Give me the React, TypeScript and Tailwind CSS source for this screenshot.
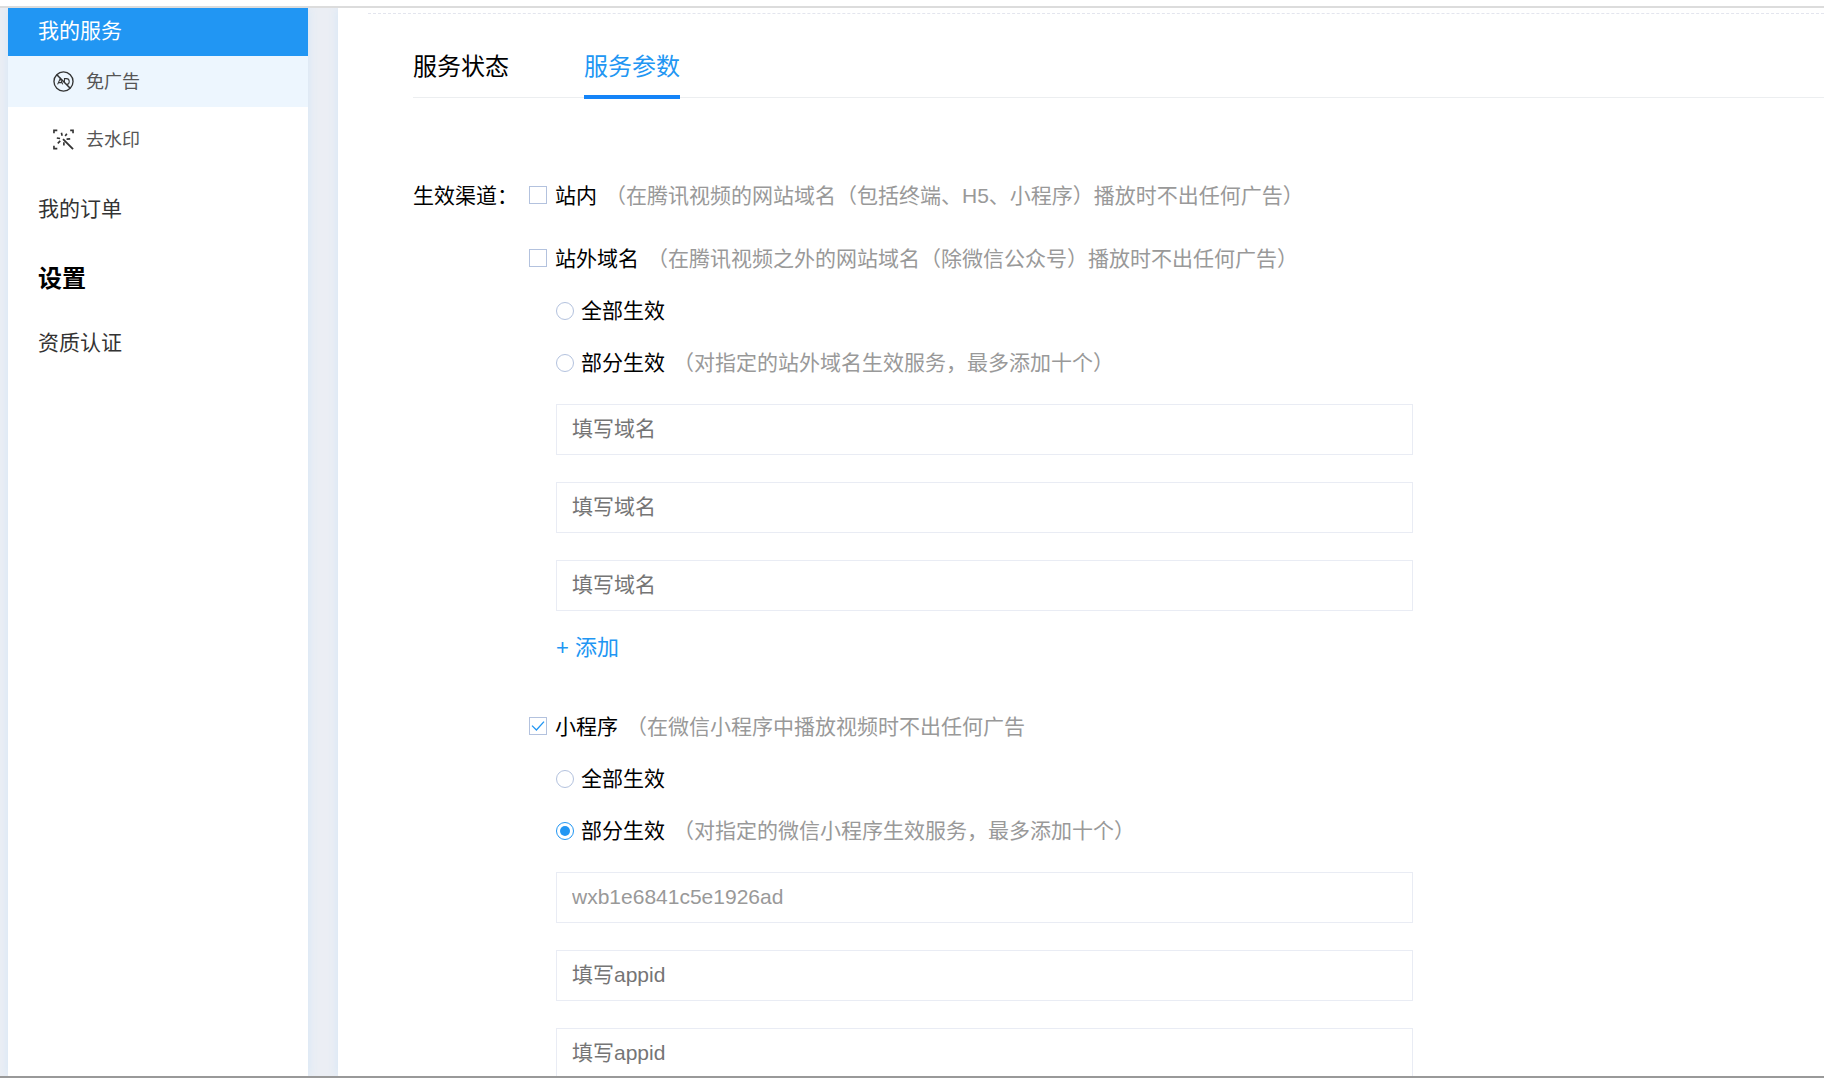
import { useState } from "react";

interface ChannelRowProps {
  label: string;
  hint?: string;
  checked: boolean;
  onChange: () => void;
}

function CheckRow({ label, hint, checked, onChange }: ChannelRowProps) {
  return (
    <label className="flex h-8 items-center">
      <span className="relative mr-2 flex size-[18px]">
        <input
          type="checkbox"
          checked={checked}
          onChange={onChange}
          className="size-[18px] appearance-none border border-[#b3c2de] bg-white"
        />
        {checked && (
          <svg viewBox="0 0 18 18" className="pointer-events-none absolute inset-0" fill="none">
            <path d="M3 8.6 7.4 13 15 4.6" stroke="#2196f3" strokeWidth="1.3" />
          </svg>
        )}
      </span>
      <span className="pt-0.5">{label}</span>
      {hint && <span className="ml-2 pt-0.5 text-[#999]">{hint}</span>}
    </label>
  );
}

function RadioRow({ label, hint, checked, onChange, name }: ChannelRowProps & { name: string }) {
  return (
    <label className="flex h-8 items-center">
      <span className="relative mr-[7px] flex size-[18px]">
        <input
          type="radio"
          name={name}
          checked={checked}
          onChange={onChange}
          className="size-[18px] appearance-none rounded-full border border-[#b3c2de] bg-white checked:border-[#2196f3]"
        />
        {checked && (
          <span className="pointer-events-none absolute inset-1 rounded-full bg-[#2196f3]" />
        )}
      </span>
      <span>{label}</span>
      {hint && <span className="ml-2 text-[#999]">{hint}</span>}
    </label>
  );
}

interface FieldListProps {
  values: string[];
  placeholder: string;
  onChange: (values: string[]) => void;
}

function FieldList({ values, placeholder, onChange }: FieldListProps) {
  return (
    <div className="mt-[25px] flex flex-col gap-[27px]">
      {values.map((value, index) => (
        <input
          key={index}
          type="text"
          aria-label={`${placeholder} ${index + 1}`}
          value={value}
          placeholder={placeholder}
          onChange={(e) => onChange(values.map((v, i) => (i === index ? e.target.value : v)))}
          className="h-[51px] w-full border border-[#e9ecf4] bg-white px-[15px] pb-0.5 text-[#999] outline-none placeholder:text-[#757575]"
        />
      ))}
    </div>
  );
}

function NoAdIcon() {
  return (
    <svg viewBox="0 0 22 22" className="size-[21px]" fill="none" stroke="#333" strokeWidth="1.4">
      <circle cx="11" cy="11" r="10" />
      <path d="M4 4 18 18" strokeWidth="1.6" />
      <path d="M4.8 14 7.6 8 10.2 14M6 12.2H9.2" strokeWidth="1.1" />
      <path d="M12 11.6V8H14C16 8 17 9.3 17 11S16 14 14.6 14" strokeWidth="1.1" />
    </svg>
  );
}

function WatermarkIcon() {
  return (
    <svg viewBox="0 0 22 22" className="size-[21px]" fill="none" stroke="#333" strokeWidth="1.7">
      <path d="M1 4.5V1.5H4.5M18 1.5H21V4.5M1 17.5V20.5H4.5" />
      <path d="M10.5 10.5 21 21" strokeWidth="1.9" />
      <path d="M8.8 4 9.6 7M14.5 5 12.8 7.4M4 9.4 7.4 10M14.2 10.6 18 10.4M7.6 12.4 5 15M11.4 14V17.2" />
    </svg>
  );
}

export default function App() {
  const [tab, setTab] = useState("params");
  const [inSite, setInSite] = useState(false);
  const [outSite, setOutSite] = useState(false);
  const [miniApp, setMiniApp] = useState(true);
  const [domainScope, setDomainScope] = useState("");
  const [appScope, setAppScope] = useState("part");
  const [domains, setDomains] = useState(["", "", ""]);
  const [appids, setAppids] = useState(["wxb1e6841c5e1926ad", "", ""]);

  const tabs = [
    { id: "status", label: "服务状态" },
    { id: "params", label: "服务参数" },
  ];

  return (
    <div className="flex h-screen flex-col overflow-hidden border-b-2 border-[#999] bg-white pt-1.5 font-['Liberation_Sans','Noto_Sans_CJK_SC',sans-serif] text-[21px] leading-8 text-black">
      <div className="flex min-h-0 flex-1 overflow-hidden border-t-2 border-[#dcdcdc] bg-[#ebeef4] pl-2">
        {/* Sidebar */}
        <nav className="w-[300px] shrink-0 bg-white shadow-[0_0_10px_#d3e6f7]">
          <a href="#services" className="flex h-12 items-center bg-[#2196f3] pb-[3px] pl-[30px] text-white">
            我的服务
          </a>
          <a href="#no-ad" className="flex h-[51px] items-center gap-3 bg-[#edf6fe] pl-[45px] text-lg text-[#555]">
            <NoAdIcon />
            免广告
          </a>
          <a href="#watermark" className="mt-[7px] flex h-[51px] items-center gap-3 pl-[45px] text-lg text-[#555]">
            <WatermarkIcon />
            去水印
          </a>
          <a href="#orders" className="mt-7 block pl-[30px] text-[#333]">
            我的订单
          </a>
          <h2 className="mt-[38px] pl-[30px] text-2xl leading-8 font-bold">设置</h2>
          <a href="#cert" className="mt-8 block pl-[30px] text-[#333]">
            资质认证
          </a>
        </nav>

        {/* Content */}
        <main className="ml-[30px] min-w-0 flex-1 overflow-hidden bg-white pt-[5px] shadow-[0_0_10px_#d3e6f7]">
          <div className="ml-[30px] border-t border-dashed border-[#e3e5ee]" />
          <div className="ml-[75px]">
            <div className="flex h-[84px] items-end gap-[75px] border-b border-[#eceef0]">
              {tabs.map((t) => (
                <button
                  key={t.id}
                  type="button"
                  onClick={() => setTab(t.id)}
                  className={`-mb-0.5 border-b-4 pb-3 text-2xl leading-8 ${
                    tab === t.id ? "border-[#1584f8] text-[#2196f3]" : "border-transparent"
                  }`}
                >
                  {t.label}
                </button>
              ))}
            </div>

            <form className="flex pt-[81px]">
              <div className="w-[116px] shrink-0 pt-px">生效渠道：</div>
              <div className="w-full max-w-[884px]">
                <CheckRow
                  label="站内"
                  hint="（在腾讯视频的网站域名（包括终端、H5、小程序）播放时不出任何广告）"
                  checked={inSite}
                  onChange={() => setInSite(!inSite)}
                />
                <div className="mt-[31px]">
                  <CheckRow
                    label="站外域名"
                    hint="（在腾讯视频之外的网站域名（除微信公众号）播放时不出任何广告）"
                    checked={outSite}
                    onChange={() => setOutSite(!outSite)}
                  />
                </div>
                <div className="mt-[21px] flex flex-col gap-5 pl-[27px]">
                  <RadioRow
                    name="domain-scope"
                    label="全部生效"
                    checked={domainScope === "all"}
                    onChange={() => setDomainScope("all")}
                  />
                  <RadioRow
                    name="domain-scope"
                    label="部分生效"
                    hint="（对指定的站外域名生效服务，最多添加十个）"
                    checked={domainScope === "part"}
                    onChange={() => setDomainScope("part")}
                  />
                </div>
                <div className="pl-[27px]">
                  <FieldList values={domains} placeholder="填写域名" onChange={setDomains} />
                  <button
                    type="button"
                    onClick={() => setDomains([...domains, ""])}
                    className="mt-[21px] block text-[22px] leading-8 text-[#2196f3]"
                  >
                    + 添加
                  </button>
                </div>

                <div className="mt-[46px]">
                  <CheckRow
                    label="小程序"
                    hint="（在微信小程序中播放视频时不出任何广告"
                    checked={miniApp}
                    onChange={() => setMiniApp(!miniApp)}
                  />
                </div>
                <div className="mt-[21px] flex flex-col gap-5 pl-[27px]">
                  <RadioRow
                    name="app-scope"
                    label="全部生效"
                    checked={appScope === "all"}
                    onChange={() => setAppScope("all")}
                  />
                  <RadioRow
                    name="app-scope"
                    label="部分生效"
                    hint="（对指定的微信小程序生效服务，最多添加十个）"
                    checked={appScope === "part"}
                    onChange={() => setAppScope("part")}
                  />
                </div>
                <div className="pl-[27px]">
                  <FieldList values={appids} placeholder="填写appid" onChange={setAppids} />
                </div>
              </div>
            </form>
          </div>
        </main>
      </div>
    </div>
  );
}
